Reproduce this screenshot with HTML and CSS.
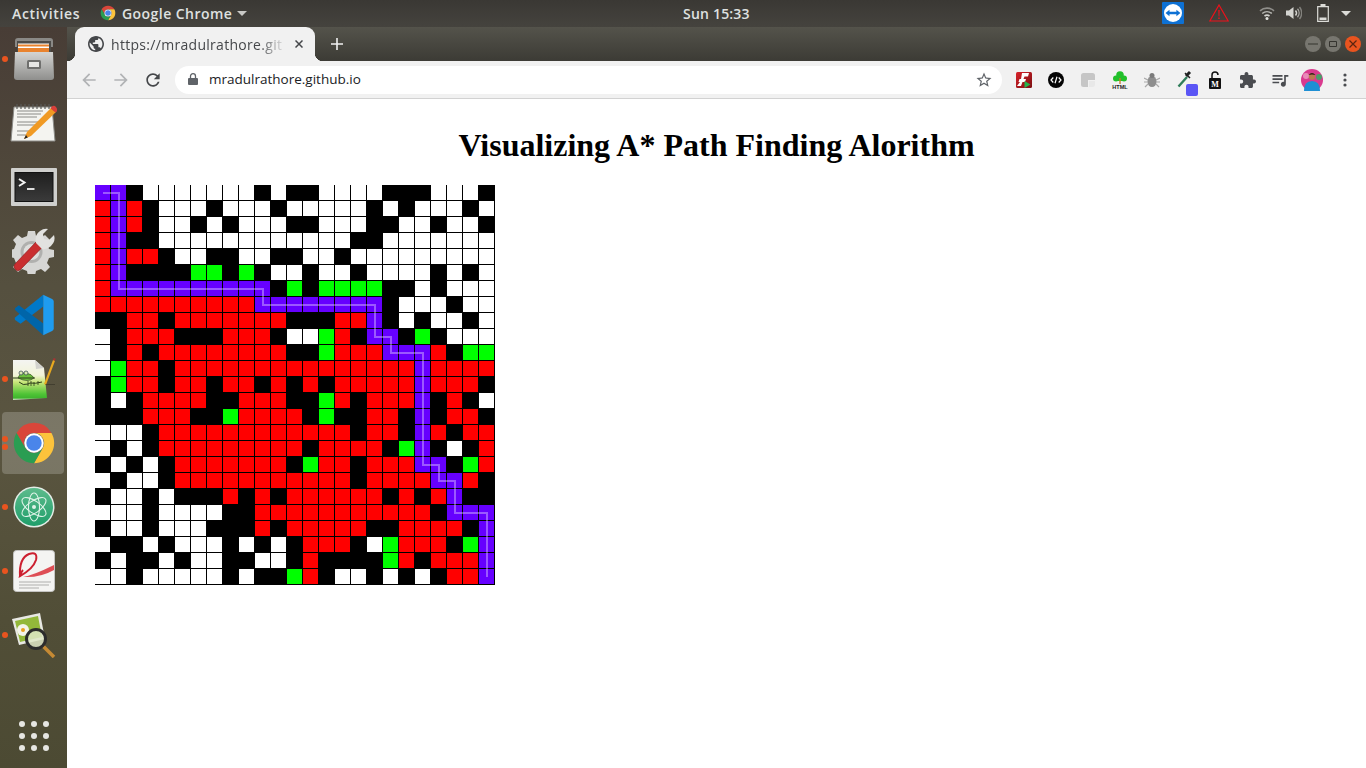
FILE: index.html
```html
<!DOCTYPE html>
<html lang="en">
<head>
<meta charset="utf-8">
<title>A* Path Finding</title>
<link rel="stylesheet" href="styles.css">
</head>
<body>
<svg class="defs" width="0" height="0" aria-hidden="true">
  <defs>
    <symbol id="chrome" viewBox="0 0 48 48">
      <path fill="#d9463a" d="M24 2A22 22 0 0 1 43.05 13H24A11 11 0 0 0 14.47 29.5L4.95 13A22 22 0 0 1 24 2Z"/>
      <path fill="#fcc33c" d="M43.05 13A22 22 0 0 1 24 46L33.53 29.5A11 11 0 0 0 24 13Z"/>
      <path fill="#2a9d52" d="M4.95 13L14.47 29.5A11 11 0 0 0 33.53 29.5L24 46A22 22 0 0 1 4.95 13Z"/>
      <circle cx="24" cy="24" r="10.6" fill="#fff"/>
      <circle cx="24" cy="24" r="8.4" fill="#4a85ea"/>
    </symbol>
  </defs>
</svg>

<header class="topbar">
  <div class="top-left">
    <span class="activities">Activities</span>
    <svg class="top-chrome" width="16" height="16"><use href="#chrome"/></svg>
    <span class="appname">Google Chrome</span>
    <svg class="caret" width="10" height="5" viewBox="0 0 10 5"><path fill="#c9c9c6" d="M0 0h10L5 5z"/></svg>
  </div>
  <span class="clock">Sun 15:33</span>
  <div class="top-right">
    <svg class="tv" width="22" height="22" viewBox="0 0 22 22"><rect width="22" height="22" rx="1" fill="#0e71d4"/><circle cx="11" cy="11" r="9" fill="#fff"/><path fill="#0e71d4" d="M3.5 11l4-3.2v2h6.9v-2l4 3.2-4 3.2v-2H7.500v2z"/></svg>
    <svg class="warn" width="20" height="18" viewBox="0 0 20 18"><path fill="none" stroke="#f0101a" stroke-width="1.2" d="M10 1L19.200 17H.8z"/><path fill="#f0101a" d="M9.300 6h1.400l-.3 6.500h-.8zM9.300 13.500h1.400v1.500H9.300z"/></svg>
    <svg class="wifi" width="16" height="14" viewBox="0 0 16 14"><g fill="none" stroke="#d4d4d0" stroke-width="1.600"><path d="M1 4.800C5 1.200 11 1.200 15 4.800" opacity=".55"/><path d="M3.200 7.500C6 5.200 10 5.200 12.800 7.500" opacity=".8"/><path d="M5.500 10C7 8.900 9 8.900 10.500 10"/></g><circle cx="8" cy="12.500" r="1.500" fill="#e4e4e0"/></svg>
    <svg class="vol" width="16" height="14" viewBox="0 0 16 14"><path fill="#d4d4d0" d="M0 4.500h3L7.500 1v12L3 9.500H0z"/><g fill="none" stroke="#d4d4d0" stroke-width="1.400"><path d="M9.500 4.500c1.200 1.400 1.200 3.600 0 5"/><path d="M11.500 2.800c2.100 2.400 2.100 6 0 8.400" opacity=".7"/><path d="M13.500 1c2.900 3.500 2.900 8.500 0 12" opacity=".45"/></g></svg>
    <svg class="batt" width="12" height="18" viewBox="0 0 12 18"><path fill="none" stroke="#dcdcd8" stroke-width="1.200" d="M.7 2.700h10.600v14.600H.7z"/><path fill="#dcdcd8" d="M3.500 0h5v2.500h-5zM2.500 13.500h7v2.500h-7z"/></svg>
    <svg class="caret-r" width="10" height="5" viewBox="0 0 10 5"><path fill="#dcdcd8" d="M0 0h10L5 5z"/></svg>
  </div>
</header>

<div class="desktop">
  <nav class="dock">
    <div class="dock-item"><i class="run run-one"></i>
      <svg width="44" height="44" viewBox="0 0 44 44"><path fill="#8a8986" d="M3 4q0-3 3-3h32q3 0 3 3v6H3z"/><path fill="#4d4c49" d="M5 4h34v14H5z"/><path fill="#fff" d="M6 6.500h31v6H6z"/><path fill="#e9832e" d="M6 7.500h31v2H6zM6 11h31v5H6z"/><linearGradient id="cab" x1="0" y1="0" x2="0" y2="1"><stop offset="0" stop-color="#d4d4d2"/><stop offset="1" stop-color="#8f8f8d"/></linearGradient><path fill="url(#cab)" d="M3 15h38l1 25q0 3-3 3H5q-3 0-3-3z"/><rect x="15" y="23" width="14" height="9" rx="1.500" fill="#6f6f6d"/><rect x="17" y="25" width="10" height="5" fill="#e6e6e4"/></svg>
    </div>
    <div class="dock-item">
      <svg width="48" height="40" viewBox="0 0 48 40"><path fill="#f4f4f0" stroke="#8c8c88" d="M4 4h38l3 34H1z"/><g stroke="#8a8a86" stroke-width="1"><path d="M7 8h26M7 11h24M7 14h20M7 19h22M7 22h18M7 28h12M7 32h14"/></g><g stroke="#5a5a58" stroke-width="1.200"><path d="M7 1v5M11 1v5M15 1v5M19 1v5M23 1v5M27 1v5M31 1v5M35 1v5M39 1v5"/></g><path fill="#f09a24" d="M41 5l5 4-25 24-7 3 3-7z"/><path fill="#d9403a" d="M42 3.500q2-1.500 4 0.500t.8 4.500l-1.300 1-5-4z"/><path fill="#222" d="M16 32l-2 4 3.800-1.600z"/></svg>
    </div>
    <div class="dock-item">
      <svg width="46" height="38" viewBox="0 0 46 38"><linearGradient id="term" x1="0" y1="0" x2="0" y2="1"><stop offset="0" stop-color="#1f1f1f"/><stop offset="1" stop-color="#3a3a3a"/></linearGradient><rect width="46" height="38" rx="1" fill="#cfcfcd"/><rect x="3.500" y="4" width="39" height="30" fill="#111"/><rect x="4.500" y="5" width="37" height="28" fill="url(#term)"/><path fill="none" stroke="#f4f4f4" stroke-width="2" d="M8 11l5.500 3.500L8 18"/><path stroke="#f4f4f4" stroke-width="1.800" d="M16 21h7.500"/></svg>
    </div>
    <div class="dock-item">
      <svg width="44" height="46" viewBox="0 0 44 46"><path fill="#d6d6d4" d="M16 3h7l1 5 5 2 4-3 5 5-3 4 2 5 5 1v7l-5 1-2 5 3 4-5 5-4-3-5 2-1 5h-7l-1-5-5-2-4 3-5-5 3-4-2-5-5-1v-7l5-1 2-5-3-4 5-5 4 3 5-2z"/><circle cx="19.500" cy="24" r="11" fill="#b0b0ae"/><circle cx="19.500" cy="24" r="8" fill="#dededc"/><path fill="#c92e30" stroke="#8f1c20" stroke-width=".7" d="M3 36l21-22 6 5.500L8 42q-3 2-5-1t0-5z"/><path fill="#e2e2e0" d="M24 15q-2-8 4-12 4-3 8-2l-5 5 1 5 5 1 5-5q2 6-3 11-4 4-9 3z"/></svg>
    </div>
    <div class="dock-item">
      <svg width="42" height="42" viewBox="0 0 100 100"><path fill="#0078c8" d="M72 2V30L18 71 5 62Q3 59 5 56Z"/><path fill="#0065a9" d="M5 38Q3 35 6 33L14 27 72 70V98Z"/><path fill="#1f9cf0" d="M72 2L93 12Q97 14 97 18V82Q97 86 93 88L72 98Z"/></svg>
    </div>
    <div class="dock-item"><i class="run run-one"></i>
      <svg width="46" height="44" viewBox="0 0 46 44"><linearGradient id="npq" x1="0" y1="0" x2="0" y2="1"><stop offset="0" stop-color="#f4f4f2"/><stop offset=".38" stop-color="#f2f4d8"/><stop offset=".55" stop-color="#c9e67a"/><stop offset=".85" stop-color="#4fc436"/><stop offset=".95" stop-color="#3fb52e"/><stop offset="1" stop-color="#e8f0e0"/></linearGradient><path fill="url(#npq)" d="M2 3h22l9 8 3 30L2 43z"/><path fill="#d2d2ce" d="M24 3l1 9 8-1z"/><path fill="#6cbf3c" stroke="#2d3d1c" stroke-width=".6" d="M7 21q2-6 8-5t8 5q-6 5-16 0z"/><path fill="none" stroke="#2d3d1c" d="M2 21h22M8 25q4 4 9 2l2-1q5 1 12-1"/><path fill="none" stroke="#2d3d1c" stroke-width=".8" d="M17 24v5M20 24v5M23 25v4M27 24v4"/><circle cx="10" cy="16" r="2" fill="#d9e8b0" stroke="#345" stroke-width=".7"/><circle cx="15" cy="16" r="2" fill="#d9e8b0" stroke="#345" stroke-width=".7"/><path fill="#e8a91f" d="M42 3l2 .8-9 24-2-.8z"/><path fill="#a33" d="M42 3l.7-2 2 .8-.7 2z"/><path fill="#000" opacity=".25" d="M34 27h10v1H34z"/></svg>
    </div>
    <div class="dock-item"><div class="tile"></div><i class="run run-upper"></i><i class="run run-lower"></i>
      <svg class="tile-icon" width="44" height="44"><use href="#chrome"/></svg>
    </div>
    <div class="dock-item"><i class="run run-one"></i>
      <svg width="42" height="42" viewBox="0 0 42 42"><linearGradient id="atm" x1="0" y1="0" x2="0" y2="1"><stop offset="0" stop-color="#5dbb8c"/><stop offset="1" stop-color="#1f9e6a"/></linearGradient><circle cx="21" cy="21" r="20.500" fill="#e3ece6"/><circle cx="21" cy="21" r="19" fill="url(#atm)"/><g fill="none" stroke="#dff3e8" stroke-width="1.100"><ellipse cx="21" cy="21" rx="14" ry="6" transform="rotate(35 21 21)"/><ellipse cx="21" cy="21" rx="14" ry="6" transform="rotate(-35 21 21)"/><ellipse cx="21" cy="21" rx="5.500" ry="14"/></g><circle cx="21" cy="21" r="2" fill="#dff3e8"/></svg>
    </div>
    <div class="dock-item"><i class="run run-one"></i>
      <svg width="42" height="42" viewBox="0 0 42 42"><rect x=".5" y=".5" width="41" height="41" rx="3" fill="#f4f4f2" stroke="#c4c4c2"/><path fill="#d9303a" d="M41 15v5Q27 28 10 27 21 25 41 15z" opacity=".85"/><path fill="none" stroke="#cc2030" stroke-width="2" d="M7 26Q6 8 16 4q9-3 7 6-3 9-16 16 1-4 3-6"/><path fill="none" stroke="#aeaeac" d="M6 32h32M6 35h30M6 38h20"/></svg>
    </div>
    <div class="dock-item"><i class="run run-one"></i>
      <svg width="46" height="46" viewBox="0 0 46 46"><path fill="#e8e8e4" d="M1 7L29 1l5 26L8 33z"/><path fill="#93b83a" d="M4 9l23-5 4 21-22 5z"/><circle cx="12" cy="18" r="6" fill="#f4f4ea"/><circle cx="12" cy="18" r="2" fill="#e9a020"/><path stroke="#c58a34" stroke-width="3.500" d="M32 34l11 11"/><circle cx="25" cy="27" r="9.500" fill="#dfe8c8" fill-opacity=".85" stroke="#2c2c2c" stroke-width="3"/></svg>
    </div>
    <div class="apps">
      <i></i><i></i><i></i><i></i><i></i><i></i><i></i><i></i><i></i>
    </div>
  </nav>

  <div class="window">
    <div class="tabstrip">
      <div class="tab">
        <svg class="favicon" width="16" height="16" viewBox="2 2 20 20"><path fill="#45474a" d="M12 2C6.480 2 2 6.480 2 12s4.480 10 10 10 10-4.480 10-10S17.520 2 12 2zm-1 17.930c-3.950-.490-7-3.850-7-7.930 0-.620.080-1.210.210-1.790L9 15v1c0 1.100.9 2 2 2v1.930zm6.900-2.540c-.260-.810-1-1.390-1.900-1.390h-1v-3c0-.550-.450-1-1-1H8v-2h2c.550 0 1-.450 1-1V7h2c1.100 0 2-.9 2-2v-.410c2.930 1.190 5 4.060 5 7.410 0 2.080-.8 3.970-2.100 5.390z"/></svg>
        <span class="tab-title">https://mradulrathore.git</span>
        <svg class="tab-close" width="8" height="8" viewBox="0 0 8 8"><path stroke="#45474a" stroke-width="1.500" d="M.5.500l7 7M7.500.500l-7 7"/></svg>
      </div>
      <svg class="newtab" width="12" height="12" viewBox="0 0 12 12"><path stroke="#f1f1f1" stroke-width="1.600" d="M6 0v12M0 6h12"/></svg>
      <div class="winbtns">
        <span class="winbtn"><svg width="10" height="10" viewBox="0 0 10 10"><path stroke="#35342f" d="M0 5h10"/></svg></span>
        <span class="winbtn"><svg width="10" height="10" viewBox="0 0 10 10"><path fill="none" stroke="#35342f" d="M1.500 2.500h7v5h-7z"/></svg></span>
        <span class="winbtn close"><svg width="10" height="10" viewBox="0 0 10 10"><path stroke="#5b2410" stroke-width="1.200" d="M1.500 1.500l7 7M8.500 1.500l-7 7"/></svg></span>
      </div>
    </div>

    <div class="toolbar">
      <span class="slot"><svg width="20" height="20" viewBox="0 0 24 24"><path fill="#b1b3b5" d="M20 11H7.830l5.590-5.590L12 4l-8 8 8 8 1.410-1.410L7.830 13H20v-2z"/></svg></span>
      <span class="slot"><svg width="20" height="20" viewBox="0 0 24 24"><path fill="#b1b3b5" d="M4 11h12.170l-5.590-5.590L12 4l8 8-8 8-1.410-1.410L16.170 13H4v-2z"/></svg></span>
      <span class="slot"><svg width="20" height="20" viewBox="0 0 24 24"><path fill="#45474a" d="M17.650 6.350C16.200 4.900 14.210 4 12 4c-4.420 0-7.990 3.580-7.990 8s3.570 8 7.990 8c3.730 0 6.840-2.550 7.730-6h-2.080c-.820 2.330-3.040 4-5.650 4-3.310 0-6-2.690-6-6s2.690-6 6-6c1.660 0 3.140.690 4.220 1.780L13 11h7V4l-2.350 2.350z"/></svg></span>
      <div class="omnibox">
        <svg class="lock" width="10" height="12" viewBox="0 0 10 12"><path fill="#5f6368" d="M1 5h8q1 0 1 1v5q0 1-1 1H1q-1 0-1-1V6q0-1 1-1z"/><path fill="none" stroke="#5f6368" stroke-width="1.300" d="M2.500 5.500V3.200a2.500 2.500 0 0 1 5 0v2.300"/></svg>
        <span class="url">mradulrathore.github.io</span>
        <svg class="star" width="18" height="18" viewBox="0 0 24 24"><path fill="#5f6368" d="M22 9.240l-7.190-.620L12 2 9.190 8.630 2 9.240l5.460 4.730L5.820 21 12 17.270 18.180 21l-1.630-7.030L22 9.240zM12 15.400l-3.760 2.270 1-4.280-3.320-2.880 4.380-.380L12 6.100l1.710 4.040 4.380.380-3.320 2.880 1 4.280L12 15.400z"/></svg>
      </div>
      <div class="exts">
        <span class="slot"><svg width="16" height="16" viewBox="0 0 16 16"><linearGradient id="fl" x1="0" y1="0" x2="1" y2="1"><stop offset="0" stop-color="#d8222a"/><stop offset="1" stop-color="#7c0f12"/></linearGradient><rect width="16" height="16" rx="1.500" fill="url(#fl)"/><path fill="#fff" d="M6 1h7l-1 3.500H8.500L7.500 7H10l-1 3H6.500L5 14H1l3-4H2.500l1-3H5z"/><path fill="#25b34a" d="M8.500 9l6 3.500-6 3.500z"/></svg></span>
        <span class="slot"><svg width="16" height="16" viewBox="0 0 16 16"><circle cx="8" cy="8" r="8" fill="#050505"/><path fill="none" stroke="#fff" stroke-width="1.200" d="M5.300 5.500L3 8l2.300 2.500M10.700 5.500L13 8l-2.300 2.500M9 4.800L7 11.200"/></svg></span>
        <span class="slot"><svg width="14" height="14" viewBox="0 0 14 14"><path fill="#c6c6c6" d="M2.500 0h9Q14 0 14 2.500V7H7v7H2.500Q0 14 0 11.500v-9Q0 0 2.500 0z"/><path fill="#e8e8e8" d="M8 8h6v3.500Q14 14 11.500 14H8z"/></svg></span>
        <span class="slot"><svg width="18" height="18" viewBox="0 0 18 18"><circle cx="9" cy="4" r="3.800" fill="#22c02a"/><circle cx="5" cy="7.500" r="3" fill="#22c02a"/><circle cx="13" cy="7.500" r="3" fill="#22c02a"/><path fill="#22c02a" d="M6 4h6v6H6z"/><path stroke="#c08030" stroke-width="1.400" d="M9 7v6"/><text class="html-tag" x="9" y="17.500" text-anchor="middle">HTML</text></svg></span>
        <span class="slot"><svg width="16" height="16" viewBox="0 0 16 16"><ellipse cx="8" cy="9.500" rx="4.500" ry="5.500" fill="#8e8e8e"/><circle cx="8" cy="3.500" r="2.500" fill="#7a7a7a"/><path stroke="#a9a9a9" stroke-width="1.200" d="M0 6l4 2M0 10h4M1 15l3-3M16 6l-4 2M16 10h-4M15 15l-3-3"/></svg></span>
        <span class="slot slot-drop"><svg width="16" height="18" viewBox="0 0 16 18"><path stroke="#2f7d5a" stroke-width="2.400" d="M1.500 16.500L10 7"/><path stroke="#1f2020" stroke-width="3" d="M9 6l4-4"/><path stroke="#1f2020" stroke-width="1.500" d="M8 3l5 5"/></svg><i class="drop-badge"></i></span>
        <span class="slot"><svg width="14" height="18" viewBox="0 0 14 18"><path fill="none" stroke="#111" stroke-width="1.500" d="M3 7V4a3 3 0 0 1 6 0"/><rect x="0" y="7" width="12" height="11" rx="1" fill="#111"/><text class="lock-m" x="6" y="16" text-anchor="middle">M</text></svg></span>
        <span class="slot"><svg width="16" height="16" viewBox="2 1 21 21"><path fill="#4a4c50" d="M20.500 11H19V7c0-1.100-.9-2-2-2h-4V3.500C13 2.120 11.880 1 10.500 1S8 2.120 8 3.500V5H4c-1.100 0-1.990.9-1.990 2v3.800H3.500c1.490 0 2.700 1.210 2.700 2.700s-1.210 2.700-2.700 2.700H2V20c0 1.100.9 2 2 2h3.800v-1.500c0-1.490 1.210-2.700 2.700-2.700 1.490 0 2.700 1.210 2.700 2.700V22H17c1.100 0 2-.9 2-2v-4h1.500c1.380 0 2.500-1.120 2.500-2.500S21.880 11 20.500 11z"/></svg></span>
        <span class="slot"><svg width="20" height="20" viewBox="0 0 24 24"><path fill="#4a4c50" d="M15 6H3v2h12V6zm0 4H3v2h12v-2zM3 16h8v-2H3v2zM17 6v8.180c-.310-.110-.650-.180-1-.180-1.660 0-3 1.340-3 3s1.340 3 3 3 3-1.340 3-3V8h3V6h-5z"/></svg></span>
        <span class="slot"><svg width="22" height="22" viewBox="0 0 22 22"><circle cx="11" cy="11" r="11" fill="#d93a8e"/><circle cx="5" cy="7" r="3" fill="#e98ab8"/><circle cx="18" cy="8" r="3" fill="#4b9e6a"/><circle cx="11" cy="7.500" r="3.200" fill="#b87a50"/><path fill="#2b1c16" d="M7.500 6q3.500-4 7 0-3.500-1-7 0z"/><path fill="#1e8fd4" d="M3 22q0-10 8-10t8 10z"/></svg></span>
      </div>
      <span class="slot menu"><svg width="4" height="14" viewBox="0 0 4 14"><circle cx="2" cy="2" r="1.600" fill="#4a4c50"/><circle cx="2" cy="7" r="1.600" fill="#4a4c50"/><circle cx="2" cy="12" r="1.600" fill="#4a4c50"/></svg></span>
    </div>

    <main class="page">
      <h1>Visualizing A* Path Finding Alorithm</h1>
      <div class="board">
        <div class="grid" id="grid"></div>
        <svg class="path" width="400" height="400" viewBox="0 0 400 400"><polyline points="8,8 24,8 24,104 168,104 168,120 280,120 280,152 296,152 296,168 328,168 328,280 344,280 344,296 360,296 360,328 392,328 392,392"/></svg>
      </div>
    </main>
  </div>
</div>
<script src="grid.js"></script>
</body>
</html>
```

FILE: styles.css
```css
* { box-sizing: border-box; }
html, body { margin: 0; height: 100%; }
body {
  width: 1366px;
  height: 768px;
  overflow: hidden;
  display: flex;
  flex-direction: column;
  font-family: "Open Sans", "Noto Sans", sans-serif;
  background: #fff;
}
.defs { position: absolute; }

/* top bar */
.topbar {
  height: 27px;
  flex: none;
  display: flex;
  align-items: center;
  padding-bottom: 1px;
  background: linear-gradient(#3a3834, #45433e);
  color: #dfe1e0;
  font-size: 14px;
  font-weight: 600;
  white-space: nowrap;
}
.top-left {
  flex: 0 0 683px;
  display: flex;
  align-items: center;
  padding-left: 12px;
}
.activities { width: 88px; letter-spacing: .7px; }
.top-chrome { margin-right: 6px; }
.appname { width: 115px; letter-spacing: .45px; }
.caret { margin-top: 1px; }
.clock { width: 68px; letter-spacing: .2px; }
.top-right {
  margin-left: auto;
  display: flex;
  align-items: center;
  padding-right: 15px;
}
.warn { margin-left: 25px; }
.wifi { margin-left: 30px; }
.vol { margin-left: 11px; }
.batt { margin-left: 15px; }
.caret-r { margin-left: 12px; }

/* dock */
.desktop { flex: 1; display: flex; min-height: 0; }
.dock {
  width: 67px;
  flex: none;
  display: flex;
  flex-direction: column;
  background: linear-gradient(#483d36 0%, #55503f 35%, #5a5540 55%, #514e37 80%, #4c4a33 100%);
}
.dock-item {
  position: relative;
  height: 64px;
  flex: none;
  display: flex;
  align-items: center;
  justify-content: center;
}
.dock-item svg { position: relative; }
.tile {
  position: absolute;
  left: 2px;
  top: 1px;
  width: 62px;
  height: 62px;
  border-radius: 4px;
  background: rgba(255, 255, 255, .2);
}
.run {
  position: absolute;
  left: 2px;
  width: 6px;
  height: 6px;
  border-radius: 50%;
  background: #e9541f;
}
.run-one { top: 29px; }
.run-upper { top: 25px; }
.run-lower { top: 33px; }
.apps {
  margin-top: auto;
  margin-bottom: 17px;
  align-self: center;
  display: grid;
  grid-template-columns: repeat(3, 6px);
  grid-auto-rows: 6px;
  gap: 6px;
}
.apps i { border-radius: 50%; background: #e6e6e2; }

/* browser window */
.window { flex: 1; display: flex; flex-direction: column; min-width: 0; }
.tabstrip {
  height: 34px;
  flex: none;
  display: flex;
  align-items: center;
  padding-left: 8px;
  background: linear-gradient(#54534b, #3c3b35);
}
.tab {
  position: relative;
  align-self: stretch;
  width: 240px;
  display: flex;
  align-items: center;
  padding: 0 12px 0 13px;
  border-radius: 9px 9px 0 0;
  background: #f1f1f1;
  color: #45474a;
  font-size: 14px;
  font-weight: 400;
}
.tab::before, .tab::after {
  content: "";
  position: absolute;
  bottom: 0;
  width: 8px;
  height: 8px;
}
.tab::before { left: -8px; background: radial-gradient(circle at 0 0, transparent 8px, #f1f1f1 8.500px); }
.tab::after { right: -8px; background: radial-gradient(circle at 100% 0, transparent 8px, #f1f1f1 8.500px); }
.favicon { flex: none; margin-right: 7px; }
.tab-title {
  white-space: nowrap;
  letter-spacing: .3px;
  -webkit-mask-image: linear-gradient(90deg, #000 86%, rgba(0, 0, 0, .15));
  mask-image: linear-gradient(90deg, #000 86%, rgba(0, 0, 0, .15));
}
.tab-close { margin-left: auto; flex: none; }
.newtab { margin-left: 16px; }
.winbtns { margin-left: auto; margin-right: 5px; display: flex; gap: 4px; }
.winbtn {
  width: 16px;
  height: 16px;
  border-radius: 50%;
  display: flex;
  align-items: center;
  justify-content: center;
  background: #77766f;
}
.winbtn.close { background: #e9541f; }

/* toolbar */
.toolbar {
  height: 38px;
  flex: none;
  display: flex;
  align-items: center;
  padding: 0 5px 0 6px;
  background: #f1f1f1;
  border-bottom: 1px solid #d2d2d2;
}
.slot {
  position: relative;
  width: 32px;
  height: 28px;
  flex: none;
  display: flex;
  align-items: center;
  justify-content: center;
}
.omnibox {
  flex: 1;
  height: 28px;
  margin: 0 6px;
  display: flex;
  align-items: center;
  padding: 0 9px 0 13px;
  border-radius: 14px;
  background: #fff;
}
.lock { flex: none; margin-right: 11px; margin-top: -1px; }
.url { color: #202124; font-size: 13.500px; margin-top: -2px; }
.star { margin-left: auto; }
.exts { display: flex; }
.menu { margin-left: 1px; }
.drop-badge {
  position: absolute;
  left: 18px;
  top: 18px;
  width: 12px;
  height: 12px;
  border-radius: 2px;
  background: #5a55f5;
}
.slot-drop svg { margin-top: -2px; margin-right: -2px; }
.html-tag { font: 700 5.500px "Liberation Sans", sans-serif; fill: #222; }
.lock-m { font: 700 8px "Liberation Serif", serif; fill: #fff; }

/* page */
.page { flex: 1; background: #fff; padding-left: 28px; min-height: 0; }
h1 {
  margin: 28px 0 21px;
  height: 37px;
  padding-right: 28px;
  text-align: center;
  color: #000;
  font: 700 32px/37px "Liberation Serif", "Times New Roman", serif;
}
.board { position: relative; width: 400px; height: 400px; }
.grid {
  width: 400px;
  height: 400px;
  display: grid;
  grid-template-columns: repeat(25, 15px);
  grid-auto-rows: 15px;
  gap: 1px;
  background: #000;
}
.w { background: #fff; }
.k { background: #000; }
.r { background: #f00; }
.g { background: #0f0; }
.p { background: #60f; }
.path { position: absolute; left: 0; top: 0; }
.path polyline {
  fill: none;
  stroke: rgba(255, 255, 255, .35);
  stroke-width: 2;
}
```

FILE: grid.js
```js
var rows = [
  "ppkwwwwwwwkwkkwwwwkkkwwwk",
  "rprkwwwkwwwkwwwwwkwkwwwkw",
  "rprkwwkwkwwwkkwwwkkwwkwwk",
  "rpkkwwwwwwwwwwwwkkwwwwwww",
  "rprrkwwkkwwkkwwkwwwwwwwww",
  "rpkkkkggkgkwwkwwkwwwwkwkw",
  "rppppppppppkgkggggkkwkwww",
  "rrrrrrrrrrppppppppkwwwkww",
  "kkrrkrrrrrrrkkkrrpkwkwwkw",
  "wkrrrkkkrrrkwwgrkppkgkwww",
  "wkrkrrrrrrrrkkgrrrpppkgg".replace("pppkgg", "ppprkgg"),
  "wgrrkrrrrrrrrrrrrrrrprrrr",
  "kgrrkrrkrrkrkrkrrrrrprrrk",
  "kwkrrrrkkrrrkkgrkrrrpkrkw",
  "kkkrrrkkgrrrrkgkkrrkpkrrk",
  "wwwkrrrrrrrrrrrrkrrkprkrr",
  "wkwkrrrrrrrrrkrrrrkgpkwkr",
  "kwkwkrrrrrrrkgrrkrrrppkgr",
  "wkwwkrrrrrrrrrrrkrrrrpprk",
  "kwwkwkkkrkrkrrrrrrkrkrpkk",
  "wwwkwwwwkkrrrrrrrrrrrkppp",
  "kwwkwwwkkkrkrrrrrkkrrrrkp",
  "wkkwkwwwkwkwkrrrkwgrrrkgp",
  "kwkkwkwwkkwwkrkkkkgrkrrrp",
  "wwkwwwwwkwkkgrkwwkwkwkrrp"
];
var grid = document.getElementById("grid");
rows.forEach(function (row) {
  for (var i = 0; i < 25; i++) {
    var cell = document.createElement("i");
    cell.className = row.charAt(i);
    grid.appendChild(cell);
  }
});
```
